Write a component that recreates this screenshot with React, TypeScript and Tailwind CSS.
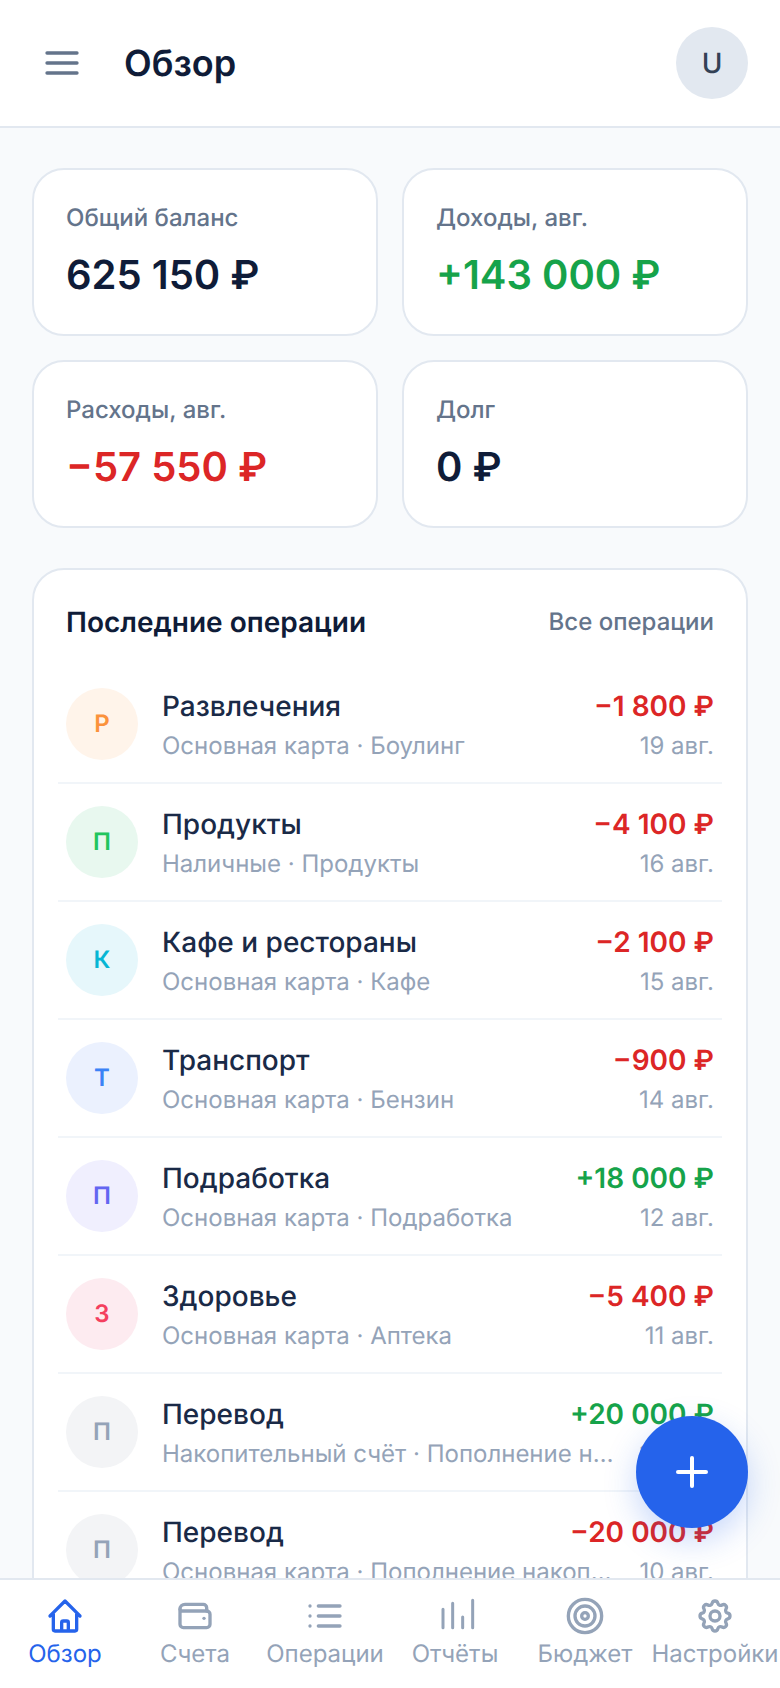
import { Plus } from "lucide-react";

const font = "font-['Inter','Noto_Sans',sans-serif]";

const stats = [
  { label: "Общий баланс", value: "625 150 ₽", color: "text-[#0f1c38]" },
  { label: "Доходы, авг.", value: "+143 000 ₽", color: "text-[#16a34a]" },
  { label: "Расходы, авг.", value: "−57 550 ₽", color: "text-[#dc2626]" },
  { label: "Долг", value: "0 ₽", color: "text-[#0f1c38]" },
];

const rows = [
  { letter: "Р", bg: "bg-[#fff4ea]", fg: "text-[#fb923c]", title: "Развлечения", sub: "Основная карта · Боулинг", sum: "−1 800 ₽", date: "19 авг.", plus: false },
  { letter: "П", bg: "bg-[#e8f8ef]", fg: "text-[#22c55e]", title: "Продукты", sub: "Наличные · Продукты", sum: "−4 100 ₽", date: "16 авг.", plus: false },
  { letter: "К", bg: "bg-[#e6f7fb]", fg: "text-[#06b6d4]", title: "Кафе и рестораны", sub: "Основная карта · Кафе", sum: "−2 100 ₽", date: "15 авг.", plus: false },
  { letter: "Т", bg: "bg-[#ebf1fe]", fg: "text-[#3b82f6]", title: "Транспорт", sub: "Основная карта · Бензин", sum: "−900 ₽", date: "14 авг.", plus: false },
  { letter: "П", bg: "bg-[#f0effe]", fg: "text-[#6366f1]", title: "Подработка", sub: "Основная карта · Подработка", sum: "+18 000 ₽", date: "12 авг.", plus: true },
  { letter: "З", bg: "bg-[#fdebf0]", fg: "text-[#f43f5e]", title: "Здоровье", sub: "Основная карта · Аптека", sum: "−5 400 ₽", date: "11 авг.", plus: false },
  { letter: "П", bg: "bg-[#f3f4f6]", fg: "text-[#94a3b8]", title: "Перевод", sub: "Накопительный счёт · Пополнение накопительного счёта", sum: "+20 000 ₽", date: "10 авг.", plus: true },
  { letter: "П", bg: "bg-[#f3f4f6]", fg: "text-[#94a3b8]", title: "Перевод", sub: "Основная карта · Пополнение накопительного счёта", sum: "−20 000 ₽", date: "10 авг.", plus: false },
];

function NavIcon({ name }: { name: string }) {
  const common = {
    width: 40,
    height: 40,
    viewBox: "0 0 24 24",
    fill: "none",
    stroke: "currentColor",
    strokeWidth: 2,
    strokeLinecap: "round" as const,
    strokeLinejoin: "round" as const,
  };
  if (name === "home")
    return (
      <svg {...common}>
        <path d="M3 12l2-2m0 0l7-7 7 7M5 10v10a1 1 0 001 1h3m10-11l2 2m-2-2v10a1 1 0 01-1 1h-3m-6 0a1 1 0 001-1v-4a1 1 0 011-1h2a1 1 0 011 1v4a1 1 0 001 1m-6 0h6" />
      </svg>
    );
  if (name === "wallet")
    return (
      <svg {...common}>
        <path d="M3 8v9a2 2 0 0 0 2 2h14a2 2 0 0 0 2-2v-6a2 2 0 0 0-2-2H3" />
        <path d="M3 8a3 3 0 0 1 3-3h11a2 2 0 0 1 2 2v2" />
        <path d="M17.4 13.4h.01" />
      </svg>
    );
  if (name === "list")
    return (
      <svg {...common}>
        <path d="M8 6h13M8 12h13M8 18h13M3 6h.01M3 12h.01M3 18h.01" />
      </svg>
    );
  if (name === "chart")
    return (
      <svg {...common} strokeWidth={1.8}>
        <path d="M4.8 19V8M10.6 19V4.4M16.6 19v-6.4M22.6 19V2.6" />
      </svg>
    );
  if (name === "target")
    return (
      <svg {...common}>
        <circle cx="12" cy="12" r="10" />
        <circle cx="12" cy="12" r="6" />
        <circle cx="12" cy="12" r="2" />
      </svg>
    );
  return (
    <svg {...common}>
      <path d="M10.325 4.317c.426-1.756 2.924-1.756 3.35 0a1.724 1.724 0 002.573 1.066c1.543-.94 3.31.826 2.37 2.37a1.724 1.724 0 001.065 2.572c1.756.426 1.756 2.924 0 3.35a1.724 1.724 0 00-1.066 2.573c.94 1.543-.826 3.31-2.37 2.37a1.724 1.724 0 00-2.572 1.065c-.426 1.756-2.924 1.756-3.35 0a1.724 1.724 0 00-2.573-1.066c-1.543.94-3.31-.826-2.37-2.37a1.724 1.724 0 00-1.065-2.572c-1.756-.426-1.756-2.924 0-3.35a1.724 1.724 0 001.066-2.573c-.94-1.543.826-3.31 2.37-2.37.996.608 2.296.07 2.572-1.065z" />
      <path d="M15 12a3 3 0 11-6 0 3 3 0 016 0z" />
    </svg>
  );
}

const nav = [
  { icon: "home", label: "Обзор" },
  { icon: "wallet", label: "Счета" },
  { icon: "list", label: "Операции" },
  { icon: "chart", label: "Отчёты" },
  { icon: "target", label: "Бюджет" },
  { icon: "gear", label: "Настройки" },
];

export default function App() {
  return (
    <div className={`${font} [text-rendering:geometricPrecision] [font-optical-sizing:none] relative h-[1688px] w-[780px] overflow-hidden bg-[#f8fafc] flex flex-col`}>
      <header className="h-[128px] shrink-0 bg-white border-b-2 border-[#e2e8f0] pl-[42px] pr-[32px] flex items-center">
        <svg width="40" height="40" viewBox="0 0 24 24" fill="none" stroke="#64748b" strokeWidth="2" strokeLinecap="round">
          <path d="M3 6h18M3 12h18M3 18h18" />
        </svg>
        <h1 className="ml-[42px] text-[36px] font-semibold text-[#0f1c38]">Обзор</h1>
        <div className="ml-auto w-[72px] h-[72px] rounded-full bg-[#e2e8f0] flex items-center justify-center text-[28px] font-medium text-[#334155]">
          U
        </div>
      </header>

      <main className="flex-1 min-h-0 overflow-hidden px-[32px] pt-[40px]">
        <div className="grid grid-cols-2 gap-[24px]">
          {stats.map((s) => (
            <div key={s.label} className="h-[168px] rounded-[32px] border-2 border-[#e2e8f0] bg-white px-[32px] pt-[32px]">
              <div className="text-[24px] leading-[32px] font-medium text-[#64748b]">{s.label}</div>
              <div className={`mt-[13px] text-[40px] leading-[56px] font-semibold ${s.color}`}>{s.value}</div>
            </div>
          ))}
        </div>

        <section className="mt-[40px] rounded-[32px] border-2 border-[#e2e8f0] bg-white px-[24px] pt-[32px]">
          <div className="flex items-center justify-between px-[8px] h-[40px]">
            <h2 className="text-[28px] font-semibold text-[#0f1c38]">Последние операции</h2>
            <span className="text-[24px] font-medium text-[#64748b]">Все операции</span>
          </div>
          <div className="mt-[24px]">
            {rows.map((r, i) => (
              <div key={i} className="h-[118px] px-[8px] flex items-center gap-[24px] border-b-2 border-[#f1f5f9]">
                <div className={`w-[72px] h-[72px] shrink-0 rounded-full flex items-center justify-center text-[24px] font-semibold ${r.bg} ${r.fg}`}>
                  {r.letter}
                </div>
                <div className="min-w-0 flex-1">
                  <div className="flex justify-between gap-[24px]">
                    <span className="text-[28px] leading-[40px] font-medium text-[#1a2a47] truncate">{r.title}</span>
                    <span className={`shrink-0 text-[28px] leading-[40px] font-semibold ${r.plus ? "text-[#16a34a]" : "text-[#dc2626]"}`}>{r.sum}</span>
                  </div>
                  <div className="mt-[4px] flex justify-between gap-[24px]">
                    <span className="text-[24px] leading-[32px] text-[#94a3b8] truncate">{r.sub}</span>
                    <span className="shrink-0 text-[24px] leading-[32px] text-[#94a3b8]">{r.date}</span>
                  </div>
                </div>
              </div>
            ))}
          </div>
        </section>
      </main>

      <nav className="h-[110px] shrink-0 bg-white border-t-2 border-[#e2e8f0] grid grid-cols-6">
        {nav.map((n, i) => (
          <div key={n.label} className={`flex flex-col items-center pt-[16px] ${i === 0 ? "text-[#2563eb]" : "text-[#94a3b8]"}`}>
            <NavIcon name={n.icon} />
            <span className="mt-[2px] text-[24px] leading-[32px] whitespace-nowrap">{n.label}</span>
          </div>
        ))}
      </nav>

      <button className="absolute left-[636px] top-[1416px] w-[112px] h-[112px] rounded-full bg-[#2563eb] flex items-center justify-center text-white shadow-[0_12px_32px_rgba(37,99,235,0.25)]">
        <Plus size={48} strokeWidth={2} />
      </button>
    </div>
  );
}
